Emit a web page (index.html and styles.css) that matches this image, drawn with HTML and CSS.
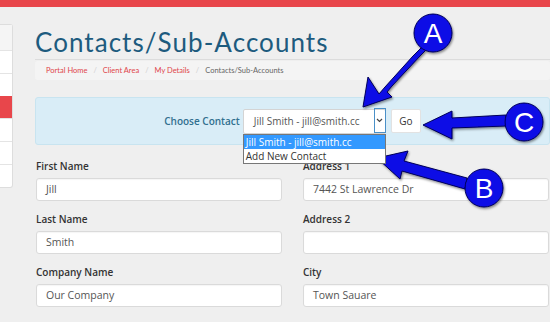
FILE: index.html
```html
<!DOCTYPE html>
<html lang="en">
<head>
    <meta charset="UTF-8">
    <title>Contacts/Sub-Accounts</title>
    <link rel="stylesheet" href="styles.css">
</head>
<body>
    <div class="topbar"></div>

    <div class="layout">
        <!-- left menu, mostly cut off -->
        <ul class="sidebar">
            <li class="side-head"></li>
            <li></li>
            <li></li>
            <li class="active"></li>
            <li></li>
            <li></li>
            <li></li>
        </ul>

        <div class="main">
            <div class="page-header">
                <h1>Contacts/Sub-Accounts</h1>
            </div>

            <ol class="breadcrumb">
                <li><a href="#">Portal Home</a></li>
                <li><a href="#">Client Area</a></li>
                <li><a href="#">My Details</a></li>
                <li class="current">Contacts/Sub-Accounts</li>
            </ol>

            <div class="contact-chooser">
                <label class="chooser-label">Choose Contact</label>
                <div class="fake-select">
                    <span class="select-value">Jill Smith - jill@smith.cc</span>
                    <span class="select-arrow">
                        <svg width="7" height="5" viewBox="0 0 7 5"><path d="M1 1 L3.5 3.5 L6 1" fill="none" stroke="#444" stroke-width="1.2"/></svg>
                    </span>
                    <ul class="select-options">
                        <li class="selected">Jill Smith - jill@smith.cc</li>
                        <li>Add New Contact</li>
                    </ul>
                </div>
                <button class="btn-go">Go</button>
            </div>

            <div class="form-grid">
                <div class="field">
                    <label>First Name</label>
                    <div class="input">Jill</div>
                </div>
                <div class="field">
                    <label>Address 1</label>
                    <div class="input">7442 St Lawrence Dr</div>
                </div>
                <div class="field">
                    <label>Last Name</label>
                    <div class="input">Smith</div>
                </div>
                <div class="field">
                    <label>Address 2</label>
                    <div class="input"></div>
                </div>
                <div class="field">
                    <label>Company Name</label>
                    <div class="input">Our Company</div>
                </div>
                <div class="field">
                    <label>City</label>
                    <div class="input">Town Sauare</div>
                </div>
            </div>
        </div>
    </div>

    <!-- annotation callouts drawn over the screenshot -->
    <svg class="callouts" width="550" height="322" viewBox="0 0 550 322">
        <defs>
            <filter id="shadow" x="-20%" y="-20%" width="140%" height="140%">
                <feDropShadow dx="1" dy="1.5" stdDeviation="1.2" flood-color="#000" flood-opacity="0.45"/>
            </filter>
        </defs>
        <g filter="url(#shadow)" fill="#0d0de6" stroke="#00005a" stroke-width="1">
            <!-- A -->
            <polygon points="426,43 413,56 385,87 379,94 368,77 363,107 392,97 387,92 392,86 421,55 434,42"/>
            <circle cx="433" cy="33" r="19"/>
            <!-- C -->
            <polygon points="506,115 452,118 452,111 423,125 452,139 452,128 506,126"/>
            <circle cx="524" cy="122" r="19"/>
            <!-- B -->
            <polygon points="467,178 404,161 408,151 377,158 400,179 402,171 465,189"/>
            <circle cx="484" cy="188" r="19"/>
        </g>
        <g class="callout-letters">
            <text x="433" y="43">A</text>
            <text x="524" y="132">C</text>
            <text x="484" y="198">B</text>
        </g>
    </svg>
</body>
</html>
```

FILE: styles.css
```css
body {
    margin: 0;
    width: 550px;
    height: 322px;
    overflow: hidden;
    position: relative;
    background-color: #efefef;
    font-family: "Open Sans", "Liberation Sans", sans-serif;
    color: #333;
}

.topbar {
    height: 7px;
    background-color: #e8464b;
}

.layout {
    display: flex;
}

/* Sidebar */
.sidebar {
    list-style: none;
    margin: 17px 0 0 0;
    padding: 0;
    width: 12px;
    background-color: white;
    border: 1px solid #ddd;
    border-left: none;
    border-radius: 0 3px 3px 0;
    align-self: flex-start;
}

.sidebar li {
    height: 22px;
    border-top: 1px solid #e4e4e4;
}

.sidebar li:first-child {
    border-top: none;
}

.sidebar .side-head {
    height: 25px;
    background-color: #f5f5f5;
}

.sidebar .active {
    height: 21px;
    background-color: #e8464b;
    border-top-color: #e8464b;
}

/* Main column */
.main {
    margin-left: 22px;
    width: 516px;
}

.page-header {
    border-bottom: 1px solid #dcdcdc;
    height: 52px;
}

.page-header h1 {
    margin: 0;
    padding-top: 20px;
    font-family: "Lato", sans-serif;
    font-weight: 400;
    font-size: 26px;
    line-height: 30px;
    letter-spacing: 1.05px;
    color: #1d5b7e;
}

.breadcrumb {
    list-style: none;
    display: flex;
    margin: 1px 0 0 0;
    padding: 0 0 0 11px;
    height: 19px;
    align-items: center;
    background-color: #f4f4f4;
    border-radius: 3px;
    font-family: "Lato", sans-serif;
    font-size: 7.5px;
}

.breadcrumb li + li::before {
    content: "/";
    color: #cfcfcf;
    padding: 0 6px;
}

.breadcrumb a {
    color: #e0454a;
    text-decoration: none;
}

.breadcrumb .current {
    color: #666;
}

/* Choose contact bar */
.contact-chooser {
    margin-top: 17px;
    height: 46px;
    display: flex;
    align-items: center;
    justify-content: center;
    background-color: #d9edf7;
    border: 1px solid #c8e4f0;
    border-radius: 3px;
}

.chooser-label {
    color: #31708f;
    font-size: 10px;
    font-weight: 600;
    margin-right: 3px;
}

.fake-select {
    position: relative;
    width: 141px;
    height: 23px;
    display: flex;
    align-items: center;
    background-color: white;
    border: 1px solid #d4d4d4;
    border-radius: 2px;
}

.select-value {
    flex: 1;
    padding-left: 10px;
    font-size: 10px;
    color: #555;
}

.select-arrow {
    width: 10px;
    height: 23px;
    margin: -1px -1px 0 0;
    display: flex;
    align-items: center;
    justify-content: center;
    border: 1px solid #4a90c8;
}

.select-options {
    position: absolute;
    top: 24px;
    left: -1px;
    width: 141px;
    margin: 0;
    padding: 0;
    list-style: none;
    background-color: white;
    border: 1px solid #777;
    z-index: 5;
}

.select-options li {
    height: 14px;
    line-height: 14px;
    padding-left: 2px;
    font-size: 10px;
    color: #333;
}

.select-options .selected {
    background-color: #3399ff;
    color: white;
}

.btn-go {
    margin-left: 5px;
    width: 30px;
    height: 24px;
    padding: 0;
    background-color: white;
    border: 1px solid #e2e2e2;
    border-radius: 2px;
    font-family: "Open Sans", sans-serif;
    font-size: 10px;
    color: #333;
}

/* Details form */
.form-grid {
    margin-top: 14px;
    display: grid;
    grid-template-columns: 246px 246px;
    column-gap: 21px;
    padding-left: 1px;
}

.field {
    margin-bottom: 11px;
}

.field label {
    display: block;
    height: 14px;
    line-height: 14px;
    margin-bottom: 5px;
    font-size: 10px;
    font-weight: 600;
    color: #333;
}

.input {
    height: 21px;
    line-height: 21px;
    padding-left: 9px;
    background-color: white;
    border: 1px solid #dadada;
    border-radius: 3px;
    box-shadow: inset 0 1px 1px rgba(0,0,0,0.04);
    font-size: 10.5px;
    color: #555;
}

/* Callouts */
.callouts {
    position: absolute;
    top: 0;
    left: 0;
}

.callout-letters text {
    fill: white;
    font-family: "Liberation Sans", sans-serif;
    font-size: 28px;
    text-anchor: middle;
}
```
